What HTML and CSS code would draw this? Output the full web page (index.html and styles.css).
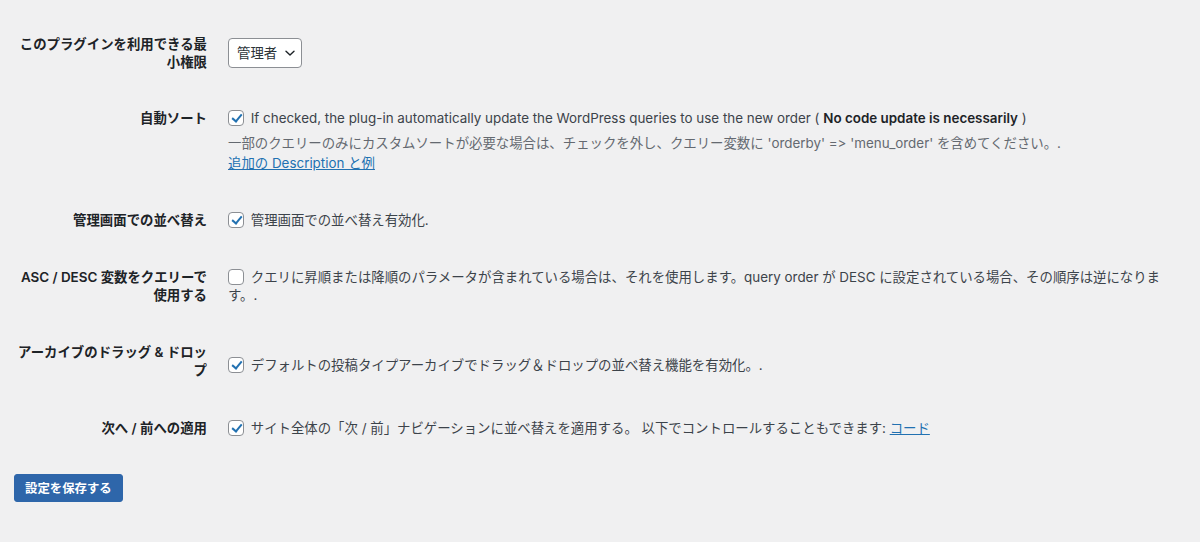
FILE: index.html
```html
<!DOCTYPE html>
<html lang="ja">
<head>
    <meta charset="UTF-8">
    <meta name="viewport" content="width=device-width, initial-scale=1.0">
    <title>並べ替え設定</title>

    <link rel="stylesheet" href="styles.css">
</head>
<body>

    <div class="wrap">
        <form id="order-settings">
            <table class="form-table">
                <tr>
                    <th class="mid">このプラグインを利用できる最小権限</th>
                    <td>
                        <span class="select-wrap">
                            <select id="capability">
                                <option>管理者</option>
                                <option>編集者</option>
                                <option>投稿者</option>
                            </select>
                            <svg class="chevron" width="12" height="12" viewBox="0 0 12 12"><path d="M2 4.2 6 8l4-3.8" fill="none" stroke="#1d2327" stroke-width="1.4" stroke-linecap="round" stroke-linejoin="round"/></svg>
                        </span>
                    </td>
                </tr>
                <tr>
                    <th>自動ソート</th>
                    <td>
                        <label><input type="checkbox" checked> If checked, the plug-in automatically update the WordPress queries to use the new order ( <b>No code update is necessarily</b> )</label>
                        <p class="description">一部のクエリーのみにカスタムソートが必要な場合は、チェックを外し、クエリー変数に 'orderby' =&gt; 'menu_order' を含めてください。.<br><a href="#">追加の Description と例</a></p>
                    </td>
                </tr>
                <tr>
                    <th>管理画面での並べ替え</th>
                    <td><label><input type="checkbox" checked> 管理画面での並べ替え有効化.</label></td>
                </tr>
                <tr class="shift">
                    <th>ASC / DESC 変数をクエリーで使用する</th>
                    <td><label><input type="checkbox"> クエリに昇順または降順のパラメータが含まれている場合は、それを使用します。query order が DESC に設定されている場合、その順序は逆になります。.</label></td>
                </tr>
                <tr class="roomy">
                    <th>アーカイブのドラッグ &amp; ドロップ</th>
                    <td><label><input type="checkbox" checked> デフォルトの投稿タイプアーカイブでドラッグ＆ドロップの並べ替え機能を有効化。.</label></td>
                </tr>
                <tr>
                    <th>次へ / 前への適用</th>
                    <td><label><input type="checkbox" checked> サイト全体の「次 / 前」ナビゲーションに並べ替えを適用する。 以下でコントロールすることもできます: <a href="#">コード</a></label></td>
                </tr>
            </table>

            <p class="submit">
                <button type="submit" class="button-primary">設定を保存する</button>
            </p>
        </form>
    </div>

</body>
</html>
```

FILE: styles.css
```css
/* General Styles */
body {
    margin: 0;
    background: #f0f0f1;
    color: #3c434a;
    font-family: Inter, "Noto Sans CJK JP", sans-serif;
    font-size: 13.4px;
    font-feature-settings: "calt" 0;
}

.wrap {
    padding: 16px 15px 0 15px;
}

/* Settings table */
.form-table {
    border-collapse: collapse;
    width: 1158px;
}

.form-table th {
    width: 192px;
    padding: 19px 21px 19px 0;
    text-align: right;
    vertical-align: top;
    font-weight: 600;
    color: #1d2327;
    line-height: 18px;
}

.form-table th.mid {
    vertical-align: middle;
}

.form-table td {
    padding: 19px 0;
    vertical-align: middle;
    line-height: 18px;
}

.form-table .shift th,
.form-table .shift td {
    padding-top: 20px;
    padding-bottom: 18px;
}

.form-table .roomy th {
    padding-top: 21px;
    padding-bottom: 21px;
}

.form-table .roomy td {
    padding-top: 25px;
    padding-bottom: 17px;
}

.form-table b {
    font-weight: 600;
    color: #1d2327;
}

/* Select with chevron */
.select-wrap {
    position: relative;
    display: inline-block;
    vertical-align: middle;
}

select {
    appearance: none;
    -webkit-appearance: none;
    height: 30px;
    padding: 0 23px 0 8px;
    border: 1px solid #8c8f94;
    border-radius: 4px;
    background: #fff;
    color: #2c3338;
    font-family: inherit;
    font-size: 13.4px;
}

.chevron {
    position: absolute;
    right: 6px;
    top: 9px;
    pointer-events: none;
}

/* Checkboxes */
input[type="checkbox"] {
    appearance: none;
    -webkit-appearance: none;
    position: relative;
    width: 16px;
    height: 16px;
    margin: 0 3px 0 0;
    border: 1px solid #8c8f94;
    border-radius: 4px;
    background: #fff;
    vertical-align: -3px;
}

input[type="checkbox"]:checked::before {
    content: "";
    position: absolute;
    left: 4.5px;
    top: 1px;
    width: 4px;
    height: 8px;
    border-right: 2px solid #2271b1;
    border-bottom: 2px solid #2271b1;
    transform: rotate(40deg);
}

.description {
    margin: 6px 0 0;
    color: #646970;
    line-height: 20px;
}

a {
    color: #2271b1;
    text-decoration: underline;
}

/* Save button */
.submit {
    margin: 0;
    padding: 18px 0 0 0;
}

.button-primary {
    height: 28px;
    padding: 0 10px;
    margin-left: -1px;
    border: 1px solid #2e66aa;
    border-radius: 3px;
    background: #2e66aa;
    color: #fff;
    font-family: inherit;
    font-size: 12.4px;
    font-weight: 600;
    cursor: pointer;
}
```
